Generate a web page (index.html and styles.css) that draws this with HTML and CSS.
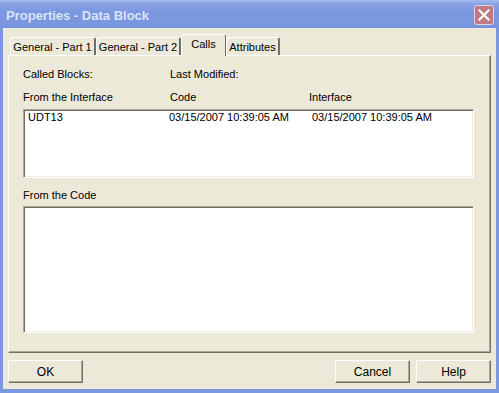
FILE: index.html
```html
<!DOCTYPE html>
<html lang="en">
<head>
    <meta charset="UTF-8">
    <title>Properties - Data Block</title>
    <link rel="stylesheet" href="styles.css">
</head>
<body>
    <div class="window">
        <div class="titlebar">
            <span class="title">Properties - Data Block</span>
            <button class="close-btn" aria-label="Close">
                <svg width="12" height="12" viewBox="0 0 12 12">
                    <path d="M1.5 1.5 L10.5 10.5 M10.5 1.5 L1.5 10.5" stroke="#fff" stroke-width="2.2" stroke-linecap="square"/>
                </svg>
            </button>
        </div>

        <div class="client">
            <div class="tabs">
                <div class="tab tab-gen1">General - Part 1</div>
                <div class="tab tab-gen2">General - Part 2</div>
                <div class="tab tab-calls active">Calls</div>
                <div class="tab tab-attr">Attributes</div>
            </div>

            <div class="panel">
                <div class="cols">
                    <span>Called Blocks:</span>
                    <span>Last Modified:</span>
                    <span></span>
                </div>
                <div class="cols cols-head">
                    <span>From the Interface</span>
                    <span>Code</span>
                    <span>Interface</span>
                </div>
                <div class="listbox list-top">
                    <div class="row">
                        <span>UDT13</span>
                        <span>03/15/2007 10:39:05 AM</span>
                        <span>03/15/2007 10:39:05 AM</span>
                    </div>
                </div>
                <div class="label-code">From the Code</div>
                <div class="listbox list-bottom"></div>
            </div>

            <div class="buttons">
                <button class="btn">OK</button>
                <div class="spacer"></div>
                <button class="btn">Cancel</button>
                <button class="btn">Help</button>
            </div>
        </div>
    </div>
</body>
</html>
```

FILE: styles.css
```css
html, body {
    margin: 0;
    padding: 0;
    background: #ECE9D8;
}

body {
    font-family: "Liberation Sans", Arial, sans-serif;
    font-size: 11px;
    color: #000;
}

.window {
    width: 499px;
    height: 393px;
    display: flex;
    flex-direction: column;
    overflow: hidden;
}

/* Title bar (inactive XP look) */
.titlebar {
    height: 28px;
    flex: none;
    display: flex;
    align-items: center;
    justify-content: space-between;
    padding: 0 5px 0 6px;
    box-sizing: border-box;
    background: linear-gradient(to bottom, #A6BDEF 0%, #8AA5E6 12%, #7B97E0 40%, #7B97E0 85%, #7491DC 100%);
}

.title {
    font-family: "Liberation Sans", Arial, sans-serif;
    font-weight: bold;
    font-size: 13px;
    color: #D8E4F8;
    margin-top: 2px;
}

.close-btn {
    width: 20px;
    height: 20px;
    padding: 0;
    margin-top: 2px;
    border: 1px solid #E7D4DA;
    border-radius: 3px;
    background: #C07A86;
    display: flex;
    align-items: center;
    justify-content: center;
}

/* Client area */
.client {
    flex: 1;
    display: flex;
    flex-direction: column;
    border-left: 3px solid #7B97E0;
    border-right: 3px solid #7B97E0;
    border-bottom: 4px solid #7B97E0;
    padding: 7px 5px 6px 5px;
    box-sizing: border-box;
}

.tabs {
    display: flex;
    align-items: flex-end;
    padding-left: 2px;
    height: 21px;
    position: relative;
    z-index: 1;
    margin-bottom: -1px;
}

.tab {
    height: 18px;
    box-sizing: border-box;
    border-top: 1px solid #fff;
    border-left: 1px solid #fff;
    border-right: 2px solid #716F64;
    border-radius: 3px 3px 0 0;
    margin-bottom: 1px;
    display: flex;
    align-items: center;
    justify-content: center;
    white-space: nowrap;
    font-size: 11px;
    background: #ECE9D8;
}

.tab-gen1 { width: 86px; }
.tab-gen2 { width: 85px; }
.tab-calls { width: 45px; }
.tab-attr { width: 54px; }

.tab.active {
    height: 22px;
    margin-bottom: 0;
    border-right: 1px solid #716F64;
    padding-bottom: 4px;
}

.panel {
    height: 298px;
    box-sizing: border-box;
    border-top: 1px solid #fff;
    border-left: 1px solid #fff;
    border-right: 1px solid #716F64;
    border-bottom: 1px solid #716F64;
    box-shadow: inset -1px -1px 0 #ACA899;
    padding: 12px 16px 0 14px;
}

.cols {
    display: grid;
    grid-template-columns: 147px 139px 1fr;
    line-height: 13px;
    height: 13px;
}

.cols-head {
    margin-top: 10px;
}

.listbox {
    background: #fff;
    box-sizing: border-box;
    border-top: 1px solid #ACA899;
    border-left: 1px solid #ACA899;
    border-right: 1px solid #fff;
    border-bottom: 1px solid #fff;
    box-shadow: inset 1px 1px 0 #716F64, inset -1px -1px 0 #F1EFE2;
}

.list-top {
    margin-top: 5px;
    height: 69px;
    padding: 1px 0 0 4px;
}

.row {
    display: grid;
    grid-template-columns: 141px 143px 1fr;
    line-height: 13px;
}

.label-code {
    margin-top: 11px;
    line-height: 13px;
    height: 13px;
}

.list-bottom {
    margin-top: 4px;
    height: 127px;
}

/* Bottom buttons */
.buttons {
    display: flex;
    margin-top: 7px;
    gap: 6px;
}

.spacer {
    flex: 1;
}

.btn {
    width: 75px;
    height: 23px;
    padding: 0;
    font-family: "Liberation Sans", Arial, sans-serif;
    font-size: 12px;
    color: #000;
    background: #ECE9D8;
    border-top: 1px solid #fff;
    border-left: 1px solid #fff;
    border-right: 1px solid #716F64;
    border-bottom: 1px solid #716F64;
    box-shadow: inset -1px -1px 0 #ACA899;
}
```
